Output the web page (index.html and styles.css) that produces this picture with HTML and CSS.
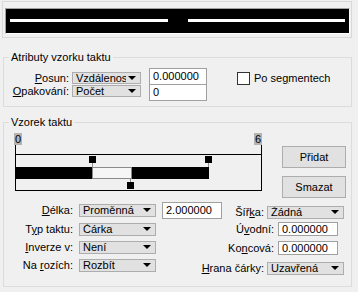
FILE: index.html
```html
<!DOCTYPE html>
<html lang="cs">
<head>
    <meta charset="UTF-8">
    <meta name="viewport" content="width=device-width, initial-scale=1.0">
    <title>Vzorek taktu</title>
    <link rel="stylesheet" href="styles.css">
</head>
<body>
    <div class="preview">
        <div class="preview-inner">
            <span class="dash dash-a"></span>
            <span class="dash dash-b"></span>
        </div>
    </div>

    <fieldset class="group group-attrs">
        <legend>Atributy vzorku taktu</legend>
        <div class="attr-body">
            <div class="attr-combos">
                <span class="lbl"><u>P</u>osun:</span>
                <div class="combo"><span class="val">Vzdálenost</span><span class="arrow"></span></div>
                <span class="lbl"><u>O</u>pakování:</span>
                <div class="combo"><span class="val">Počet</span><span class="arrow"></span></div>
            </div>
            <div class="attr-inputs">
                <div class="field">0.000000</div>
                <div class="field">0</div>
            </div>
            <label class="check"><span class="box"></span>Po se<u>g</u>mentech</label>
        </div>
    </fieldset>

    <fieldset class="group group-pattern">
        <legend>Vzorek taktu</legend>
        <div class="editor">
            <div class="pattern">
                <div class="ruler">
                    <div class="mark mark-start"><span class="num">0</span><span class="tick"></span></div>
                    <div class="mark mark-end"><span class="num">6</span><span class="tick"></span></div>
                </div>
                <div class="strip">
                    <span class="bar bar-a"></span>
                    <span class="gap"></span>
                    <span class="bar bar-b"></span>
                    <span class="knob knob-1"></span><span class="stem stem-1"></span>
                    <span class="knob knob-2"></span><span class="stem stem-2"></span>
                    <span class="knob knob-3"></span><span class="stem stem-3"></span>
                </div>
            </div>
            <div class="side">
                <button type="button">Přidat</button>
                <button type="button">Smazat</button>
            </div>
        </div>

        <div class="props">
            <span class="lbl r1"><u>D</u>élka:</span>
            <div class="combo wide r1"><span class="val">Proměnná</span><span class="arrow"></span></div>
            <div class="field r1-field">2.000000</div>
            <div class="right r1-right">
                <span class="lbl">Šíř<u>k</u>a:</span>
                <div class="combo wide"><span class="val">Žádná</span><span class="arrow"></span></div>
            </div>

            <span class="lbl">T<u>y</u>p taktu:</span>
            <div class="combo wide"><span class="val">Čárka</span><span class="arrow"></span></div>
            <div class="right span2">
                <span class="lbl">Ú<u>v</u>odní:</span>
                <div class="field small up">0.000000</div>
            </div>

            <span class="lbl"><u>I</u>nverze v:</span>
            <div class="combo wide"><span class="val">Není</span><span class="arrow"></span></div>
            <div class="right span2">
                <span class="lbl">Ko<u>n</u>cová:</span>
                <div class="field small">0.000000</div>
            </div>

            <span class="lbl">Na <u>r</u>ozích:</span>
            <div class="combo wide"><span class="val">Rozbít</span><span class="arrow"></span></div>
            <div class="right span2 r4-right">
                <span class="lbl"><u>H</u>rana čárky:</span>
                <div class="combo wide"><span class="val">Uzavřená</span><span class="arrow"></span></div>
            </div>
        </div>
    </fieldset>
</body>
</html>
```

FILE: styles.css
```css
body {
    margin: 0;
    background-color: #f0f0f0;
    font-family: 'Liberation Sans', Arial, sans-serif;
    font-size: 11px;
    color: #000;
}

u {
    text-decoration: underline;
}

/* top preview of the line */
.preview {
    box-sizing: border-box;
    width: 350px;
    height: 37px;
    margin: 1px 0 0 2px;
    padding: 6px 0 0 2px;
    border: 1px solid #d9d9d9;
}

.preview-inner {
    box-sizing: border-box;
    display: flex;
    justify-content: space-between;
    width: 345px;
    height: 26px;
    padding: 10px 4px 0 4px;
    background-color: #000;
    border-top: 1px solid #a0a0a0;
    border-left: 1px solid #a0a0a0;
    border-right: 1px solid #fff;
    border-bottom: 1px solid #fff;
}

.dash {
    display: block;
    height: 3px;
    background-color: #fff;
}

.dash-a { width: 158px; }
.dash-b { width: 157px; }

/* group boxes */
.group {
    box-sizing: border-box;
    width: 349px;
    min-width: 0;
    margin: 0 0 0 3px;
    border: 1px solid #dcdcdc;
}

.group legend {
    margin-left: 5px;
    padding: 0 2px;
    line-height: 14px;
}

.group-attrs {
    margin-top: 12px;
    padding: 4px 0 5px 0;
}

.group-pattern {
    margin-top: 8px;
    padding: 4px 0 9px 0;
}

.lbl {
    line-height: 12px;
    white-space: nowrap;
}

/* combo boxes */
.combo {
    box-sizing: border-box;
    position: relative;
    height: 12px;
    padding-left: 3px;
    background-color: #e1e1e1;
    border: 1px solid #adadad;
    line-height: 10px;
    overflow: hidden;
    white-space: nowrap;
}

.combo .val {
    display: block;
    width: calc(100% - 14px);
    overflow: hidden;
}

.combo .arrow {
    position: absolute;
    right: 4px;
    top: 3px;
    width: 0;
    height: 0;
    border-left: 4px solid transparent;
    border-right: 4px solid transparent;
    border-top: 4px solid #000;
}

.combo.wide {
    width: 77px;
    height: 13px;
    line-height: 11px;
}

/* text fields */
.field {
    box-sizing: border-box;
    height: 17px;
    padding-left: 3px;
    background-color: #fff;
    border: 1px solid #a0a0a0;
    line-height: 15px;
}

/* pattern attributes */
.attr-body {
    display: flex;
    align-items: flex-start;
}

.attr-combos {
    display: grid;
    grid-template-columns: 65px 69px;
    grid-auto-rows: 12px;
    column-gap: 3px;
    row-gap: 1px;
    margin-top: 4px;
}

.attr-combos .lbl {
    text-align: right;
}

.attr-inputs {
    width: 58px;
    margin-left: 8px;
}

.attr-inputs .field + .field {
    margin-top: -1px;
}

.check {
    display: flex;
    align-items: center;
    margin: 4px 0 0 30px;
    line-height: 13px;
}

.check .box {
    box-sizing: border-box;
    width: 13px;
    height: 13px;
    margin-right: 4px;
    background-color: #fff;
    border: 1px solid #333;
}

/* pattern editor */
.editor {
    display: flex;
    align-items: flex-start;
}

.pattern {
    width: 248px;
    margin-left: 10px;
}

.ruler {
    display: flex;
    justify-content: space-between;
    height: 21px;
}

.mark {
    display: flex;
    flex-direction: column;
}

.mark-start { align-items: flex-start; }
.mark-end { align-items: flex-end; }

.num {
    width: 8px;
    height: 12px;
    line-height: 12px;
    text-align: center;
    background-color: #b4b4b4;
}

.tick {
    width: 1px;
    height: 9px;
    background-color: #000;
}

.mark-start .tick {
    margin-left: 1px;
}

.strip {
    box-sizing: border-box;
    position: relative;
    width: 247px;
    height: 37px;
    margin-left: 1px;
    border: 1px solid #000;
}

.bar, .gap, .knob, .stem {
    position: absolute;
    display: block;
}

.bar {
    top: 12px;
    height: 12px;
    background-color: #000;
}

.bar-a { left: -1px; width: 77px; }
.bar-b { left: 116px; width: 77px; }

.gap {
    box-sizing: border-box;
    top: 12px;
    left: 76px;
    width: 40px;
    height: 12px;
    background-color: #f6f6f6;
    border: 1px solid #8a8a8a;
}

.knob {
    width: 7px;
    height: 7px;
    background-color: #000;
}

.stem {
    width: 1px;
    background-color: #8a8a8a;
}

.knob-1 { left: 73px; top: 1px; }
.stem-1 { left: 76px; top: 8px; height: 4px; }
.knob-2 { left: 111px; top: 27px; }
.stem-2 { left: 114px; top: 24px; height: 3px; }
.knob-3 { left: 189px; top: 1px; }
.stem-3 { left: 192px; top: 8px; height: 4px; }

.side {
    display: flex;
    flex-direction: column;
    gap: 8px;
    margin: 13px 0 0 20px;
}

.side button {
    box-sizing: border-box;
    width: 64px;
    height: 22px;
    padding: 0;
    font-family: inherit;
    font-size: 11px;
    color: #000;
    background-color: #e1e1e1;
    border: 1px solid #adadad;
}

/* bottom properties */
.props {
    display: grid;
    grid-template-columns: 69px 77px 60px 1fr;
    grid-template-rows: 21px 18px 18px 18px;
    column-gap: 6px;
    align-items: start;
    margin: 4px 7px 0 0;
}

.props > .lbl {
    grid-column: 1;
    text-align: right;
    line-height: 13px;
}

.props .r1 {
    margin-top: 2px;
}

.r1-field {
    grid-column: 3;
}

.right {
    display: flex;
    justify-content: flex-end;
    align-items: center;
    gap: 3px;
}

.right .lbl {
    line-height: 13px;
}

.r1-right {
    grid-column: 4;
    margin-top: 4px;
}

.span2 {
    grid-column: 3 / 5;
}

.r4-right {
    margin-top: 3px;
}

.field.small {
    width: 60px;
    height: 14px;
    margin: 0 6px 0 1px;
    line-height: 12px;
}

.field.up {
    margin-top: -1px;
}
```
